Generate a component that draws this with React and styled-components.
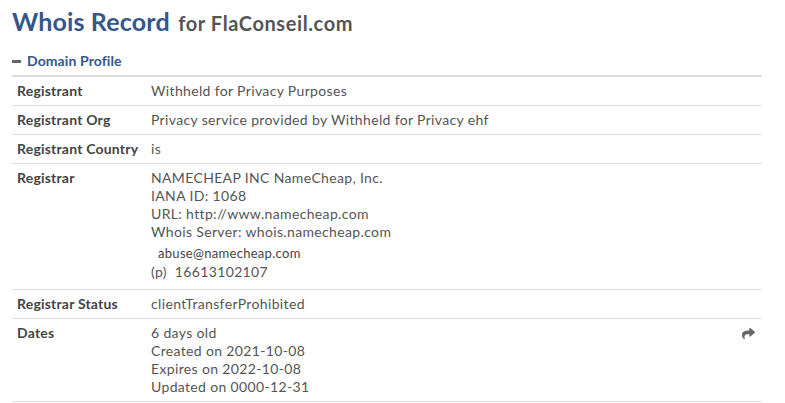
import React from "react";
import styled, { createGlobalStyle } from "styled-components";
import { FaShare } from "react-icons/fa";

const Global = createGlobalStyle`
  html, body { margin: 0; padding: 0; background: #fff; }
  body { font-family: Lato, "Open Sans", sans-serif; }
`;

const Page = styled.div`
  width: 750px;
  padding: 3px 0 0 12px;
`;

const Title = styled.h1`
  margin: 0;
  font-size: 25px;
  line-height: 36px;
  font-weight: 700;
  letter-spacing: 0.15px;
  color: #34568b;
`;

const Sub = styled.small`
  font-size: 20px;
  font-weight: 700;
  letter-spacing: 0.6px;
  color: #555;
  margin-left: 3px;
`;

const SectionHead = styled.div`
  display: flex;
  align-items: center;
  gap: 6px;
  margin-top: 11px;
  padding-bottom: 5px;
  border-bottom: 2px solid #ddd;
  font-size: 14px;
  line-height: 18px;
  font-weight: 700;
  letter-spacing: 0.1px;
  color: #34568b;
`;

const Dash = styled.span`
  display: inline-block;
  width: 9px;
  height: 3px;
  background: #666;
`;

const Row = styled.div`
  display: flex;
  align-items: flex-start;
  border-bottom: 1px solid #ddd;
  padding: 5px 0 ${(p) => p.$pb || 5}px 5px;
  font-size: 14px;
  line-height: 18px;
  color: #555;
`;

const Label = styled.div`
  flex: 0 0 134px;
  font-weight: 700;
  letter-spacing: 0.2px;
  color: #444;
`;

const Value = styled.div`
  flex: 1;
  letter-spacing: 0.35px;
`;

const Small = styled.div`
  font-size: 13px;
  letter-spacing: 0.3px;
  margin: 3px 0 1px 7px;
  color: #444;
`;

const Phone = styled.div`
  display: flex;
  gap: 8px;
`;

const Tool = styled.div`
  display: flex;
  color: #666;
  padding: 3px 7px 0 0;
  font-size: 13px;
`;

const rows = [
  ["Registrant", ["Withheld for Privacy Purposes"]],
  ["Registrant Org", ["Privacy service provided by Withheld for Privacy ehf"]],
  ["Registrant Country", ["is"]],
];

export default function App() {
  return (
    <Page>
      <Global />
      <Title>
        Whois Record<Sub> for FlaConseil.com</Sub>
      </Title>
      <SectionHead>
        <Dash />
        Domain Profile
      </SectionHead>
      {rows.map(([l, v]) => (
        <Row key={l}>
          <Label>{l}</Label>
          <Value>{v.map((t) => <div key={t}>{t}</div>)}</Value>
        </Row>
      ))}
      <Row $pb={8}>
        <Label>Registrar</Label>
        <Value>
          <div>NAMECHEAP INC NameCheap, Inc.</div>
          <div>IANA ID: 1068</div>
          <div>URL: http://www.namecheap.com</div>
          <div>Whois Server: whois.namecheap.com</div>
          <Small>abuse@namecheap.com</Small>
          <Phone>
            <span>(p)</span>
            <span>16613102107</span>
          </Phone>
        </Value>
      </Row>
      <Row>
        <Label>Registrar Status</Label>
        <Value>clientTransferProhibited</Value>
      </Row>
      <Row>
        <Label>Dates</Label>
        <Value>
          <div>6 days old</div>
          <div>Created on 2021-10-08</div>
          <div>Expires on 2022-10-08</div>
          <div>Updated on 0000-12-31</div>
        </Value>
        <Tool>
          <FaShare />
        </Tool>
      </Row>
    </Page>
  );
}
